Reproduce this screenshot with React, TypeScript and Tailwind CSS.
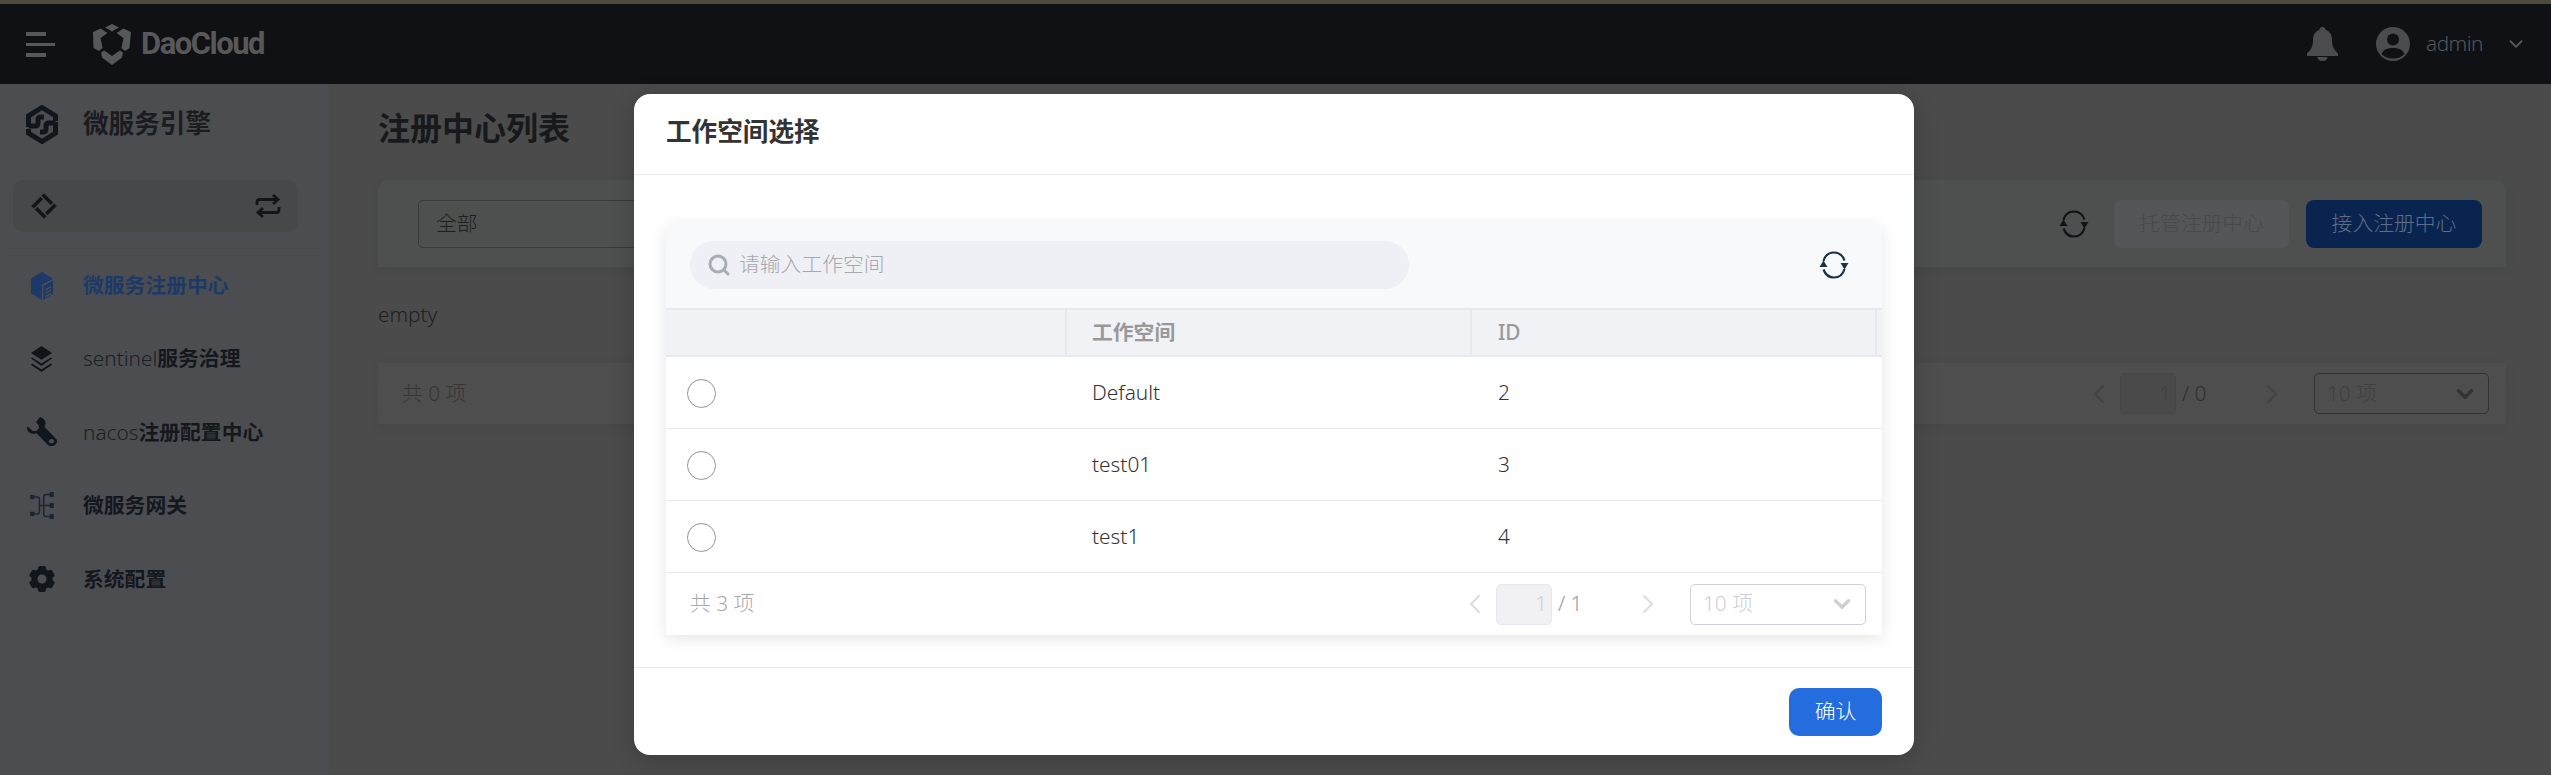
import { ChevronDown, ChevronLeft, ChevronRight, Search } from 'lucide-react';

const FONT = "font-['Noto_Sans','Noto_Sans_CJK_SC',sans-serif]";

function HeaderLogo() {
  return (
    <svg width="38" height="41" viewBox="0 0 38 41" fill="#58585a">
      <path d="M19 0l7 3.500-7 4-7-4z" />
      <path d="M0 8l7.500-3.500 7 4.500-7 5 2 10-3.500 3L.5 24z" />
      <path d="M38 8l-7.500-3.500-7 4.500 7 5-2 10 3.500 3 4.500-3z" />
      <path d="M11 26.500l8 5.500 8-5.500 3 2-1 5L19 41 9 33.500l-1-5z" />
    </svg>
  );
}

function BrandLogo() {
  return (
    <svg width="36" height="39" viewBox="0 0 36 39" fill="none" stroke="#11161d" strokeWidth="5">
      <path d="M4.500 22V11L18 2.500 31.500 11v5" />
      <path d="M4.500 21H11c2 0 3-1 3-3v-3c0-2 1-3 3-3h3" />
      <path d="M31.500 17v11L18 36.500 4.500 28v-4" />
      <path d="M31.500 18H25c-2 0-3 1-3 3v3c0 2-1 3-3 3h-3" />
    </svg>
  );
}

function WorkspaceIcon() {
  return (
    <svg width="26" height="26" viewBox="0 0 26 26" fill="#131518">
      <g transform="rotate(45 13 13)">
        <rect x="4" y="4" width="13" height="3.600" />
        <rect x="18.400" y="4" width="3.600" height="13" />
        <rect x="9" y="18.400" width="13" height="3.600" />
        <rect x="4" y="9" width="3.600" height="13" />
      </g>
    </svg>
  );
}

function SwitchIcon() {
  return (
    <svg width="26" height="24" viewBox="0 0 26 24" fill="none" stroke="#131518" strokeWidth="2.800">
      <path d="M2 11V8c0-1.500 1-2.500 2.500-2.500H23" />
      <path d="M18 1l5 4.500L18 10" />
      <path d="M24 13v3c0 1.500-1 2.500-2.500 2.500H3" />
      <path d="M8 14l-5 4.500L8 23" />
    </svg>
  );
}

function RefreshIcon({ color }: { color: string }) {
  return (
    <svg width="32" height="32" viewBox="0 0 32 32" fill="none" stroke={color} strokeWidth="2.200">
      <path d="M5.500 12C7 6.500 11 3.500 16 3.500c4.500 0 8.500 2.500 10.500 8" />
      <path d="M26.500 20c-1.500 5.500-5.500 8.500-10.500 8.500-4.500 0-8.500-2.500-10.500-8" />
      <path d="M1.500 18l4-6.500 4 6.500z" fill={color} stroke="none" />
      <path d="M22.500 14l4 6.500 4-6.500z" fill={color} stroke="none" />
    </svg>
  );
}

function RegistryIcon() {
  return (
    <svg width="24" height="28" viewBox="0 0 26 33" fill="#1c3a69">
      <path d="M13 0L26 8 13 15v18L0 25V8z" />
      <path d="M14.500 16.500L26 10v15.500L14.500 33zM17 20v2l6.500-3.500v-2zM17 24v2l6.500-3.500v-2zM17 28v2l6.500-3.500v-2z" fillRule="evenodd" />
    </svg>
  );
}

function LayersIcon() {
  return (
    <svg width="25" height="26" viewBox="0 0 26 32" fill="#10141b">
      <path d="M13 0l13 8.500L13 17 0 8.500z" />
      <path d="M1.500 14L13 21.500 24.500 14l1.500 1.500L13 24.500 0 15.500z" />
      <path d="M1.500 21.500L13 29l11.500-7.500L26 23l-13 9-13-9z" />
    </svg>
  );
}

function WrenchIcon() {
  return (
    <svg width="30" height="30" viewBox="0 0 30 36" preserveAspectRatio="none" fill="none">
      <path
        d="M13 0c4 1.500 6 4.500 5.500 8.500-.2 1.500-.5 2.500-1 3.500L29 26c1.500 2 1.500 5-.5 7-2 2.500-5.500 2.500-7.500.5L9.500 19.500c-1 .5-2 .8-3.500.5C2.500 19.500 0 17 0 12.500l.5-1 5 5c2 1 5 0 6-2.500 1-2.500.5-4-1-5.500L9 6l4-6z"
        fill="#11161d"
      />
      <circle cx="24.500" cy="29" r="2.600" fill="#4b4d50" />
    </svg>
  );
}

function GatewayIcon() {
  return (
    <svg width="26" height="27" viewBox="0 0 28 32" fill="none" stroke="#1a2432" strokeWidth="1.800">
      <path d="M3 6h5c2 0 3 1.500 3 3v14c0 1.500-1 3-3 3H3" />
      <path d="M11 16h14" />
      <path d="M25 3h-6c-2 0-3 1.500-3 3v20c0 1.500 1 3 3 3h6" />
      <g fill="#1a2432" stroke="none">
        <rect x="0" y="3.500" width="5" height="5" />
        <rect x="0" y="23.500" width="5" height="5" />
        <rect x="23" y="0" width="5" height="6" />
        <rect x="23" y="13" width="5" height="6" />
        <rect x="23" y="26" width="5" height="6" />
      </g>
    </svg>
  );
}

function GearIcon() {
  return (
    <svg width="26" height="26" viewBox="0 0 26 26">
      <circle cx="13" cy="13" r="7.500" fill="none" stroke="#11161d" strokeWidth="6" />
      {[0, 60, 120, 180, 240, 300].map((deg) => (
        <rect key={deg} x="9" y="0" width="8" height="6" rx="2" fill="#11161d" transform={`rotate(${deg} 13 13)`} />
      ))}
    </svg>
  );
}

function BellIcon() {
  return (
    <svg width="31" height="34" viewBox="0 0 31 34" fill="#4c4c4e">
      <path d="M15.500 0c2 0 3 1.300 3 2.800C23 4.500 25 8 25 13c0 5 1 9 6 13.500V29H0v-2.500C5 22 6 18 6 13c0-5 2-8.500 6.500-10.200C12.500 1.300 13.500 0 15.500 0z" />
      <path d="M10.500 30h10c0 2.500-2 4-5 4s-5-1.500-5-4z" />
    </svg>
  );
}

function AvatarIcon() {
  return (
    <svg width="34" height="34" viewBox="0 0 34 34">
      <circle cx="17" cy="17" r="17" fill="#4c4c4e" />
      <circle cx="17" cy="12.500" r="6" fill="#0f1114" />
      <path d="M5.500 27c2-4.500 6-6 11.500-6s9.500 1.500 11.500 6c-3 3-7 4.500-11.500 4.500S8.500 30 5.500 27z" fill="#0f1114" />
    </svg>
  );
}

function Pager({
  total,
  pages,
  dim,
}: {
  total: string;
  pages: string;
  dim?: boolean;
}) {
  const chevron = dim ? 'text-[#434343]' : 'text-[#dcdcdf]';
  const faint = dim ? 'text-[#404040]' : 'text-[#cfcfd2]';
  return (
    <div className="flex h-full items-center justify-between">
      <span className={`text-[20.800px] ${dim ? 'text-[#363636]' : 'text-[#a8a8ac]'}`}>{total}</span>
      <div className="flex items-center">
        <ChevronLeft className={`size-[32px] ${chevron}`} strokeWidth={1.500} />
        <div
          className={`ml-[5px] flex h-[41px] w-[56px] items-center justify-end rounded-[5px] border pr-[4px] text-[20.800px] ${faint} ${
            dim ? 'border-[#474747] bg-[#4a4a4a]' : 'border-[#e8e9f0] bg-[#f1f1f3]'
          }`}
        >
          1
        </div>
        <span className={`ml-[6px] w-[74px] text-[20.800px] ${dim ? 'text-[#2f2f2f]' : 'text-[#9a9a9e]'}`}>{pages}</span>
        <ChevronRight className={`size-[32px] ${chevron}`} strokeWidth={1.500} />
        <div
          className={`ml-[26px] flex h-[41px] items-center justify-between rounded-[5px] border pl-[12px] pr-[10px] text-[20.800px] ${faint} ${
            dim ? 'w-[175px] border-[#333333]' : 'w-[176px] border-[#cdd0da]'
          }`}
        >
          <span>10 项</span>
          <ChevronDown className={`size-[26px] ${dim ? 'text-[#333333]' : 'text-[#cfcfd2]'}`} strokeWidth={3} />
        </div>
      </div>
    </div>
  );
}

const navItems = [
  { icon: <RegistryIcon />, label: <span className="font-bold text-[#1c3a69]">微服务注册中心</span> },
  {
    icon: <LayersIcon />,
    label: (
      <>
        <span className="font-light text-[#1c2026]">sentinel</span>
        <span className="font-bold">服务治理</span>
      </>
    ),
  },
  {
    icon: <WrenchIcon />,
    label: (
      <>
        <span className="font-light text-[#1c2026]">nacos</span>
        <span className="font-bold">注册配置中心</span>
      </>
    ),
  },
  { icon: <GatewayIcon />, label: <span className="font-bold">微服务网关</span> },
  { icon: <GearIcon />, label: <span className="font-bold">系统配置</span> },
];

const workspaces = [
  { name: 'Default', id: '2' },
  { name: 'test01', id: '3' },
  { name: 'test1', id: '4' },
];

export default function App() {
  return (
    <div className={`${FONT} relative flex h-screen w-full flex-col overflow-hidden bg-[#4b4b4b] font-light`}>
      {/* Top bar */}
      <div className="h-[4px] shrink-0 bg-[#4d4a40]" />
      <header className="flex h-[80px] shrink-0 items-center bg-[#0f1114] pl-[26px] pr-[24px]">
        <div className="flex w-[29px] flex-col gap-[7px]">
          <div className="h-[4px] w-[20px] bg-[#58585a]" />
          <div className="h-[3px] w-[29px] bg-[#58585a]" />
          <div className="h-[4px] w-[20px] bg-[#58585a]" />
        </div>
        <div className="ml-[38px]">
          <HeaderLogo />
        </div>
        <span className="ml-[10px] font-['Roboto',sans-serif] text-[31px] font-bold tracking-[-1.500px] text-[#58585a]">
          DaoCloud
        </span>
        <div className="ml-auto flex items-center">
          <BellIcon />
          <div className="ml-[38px]">
            <AvatarIcon />
          </div>
          <span className="ml-[16px] w-[57px] whitespace-nowrap text-[20.800px] tracking-[-0.500px] text-[#55555a]">admin</span>
          <ChevronDown className="ml-[22px] size-[22px] text-[#55555a]" />
        </div>
      </header>

      <div className="flex min-h-0 flex-1">
        {/* Sidebar */}
        <aside className="w-[330px] shrink-0 border-r border-[#484a4c] bg-[#4b4d50] text-[20.800px] text-[#14181e]">
          <div className="flex h-[80px] items-center pl-[24px]">
            <BrandLogo />
            <span className="ml-[23px] text-[25.600px] font-bold text-[#1a1c20]">微服务引擎</span>
          </div>
          <div className="mx-[13px] mt-[16px] flex h-[52px] w-[285px] items-center justify-between rounded-[10px] bg-[#47484a] pl-[18px] pr-[17px]">
            <WorkspaceIcon />
            <SwitchIcon />
          </div>
          <div className="mx-[10px] mt-[16px] h-px bg-[#46484b]" />
          <nav>
            {navItems.map((item, i) => (
              <div key={i} className="flex h-[73.400px] items-center">
                <div className="flex w-[83px] justify-center">{item.icon}</div>
                <div>{item.label}</div>
              </div>
            ))}
          </nav>
        </aside>

        {/* Main */}
        <main className="min-w-0 flex-1 pl-[48px] pr-[45px]">
          <div className="flex h-[88px] items-center text-[32px] font-bold text-[#17191c]">注册中心列表</div>
          <div className="mt-[8px] flex h-[87px] items-center rounded-t-[10px] bg-[#4e5050] pl-[40px] pr-[24px] shadow-[0_4px_12px_rgba(0,0,0,0.06)]">
            <div className="flex h-[48px] w-[500px] items-center rounded-[5px] border border-[#38393a] pl-[17px] text-[20.800px] text-[#1e1e1e]">
              全部
            </div>
            <div className="ml-auto">
              <RefreshIcon color="#101215" />
            </div>
            <button className="ml-[24px] h-[48px] w-[175px] rounded-[8px] bg-[#545659] text-[20.800px] text-[#47494c]">
              托管注册中心
            </button>
            <button className="ml-[17px] h-[48px] w-[176px] rounded-[8px] bg-[#0a2450] text-[20.800px] text-[#5f6e88]">
              接入注册中心
            </button>
          </div>
          <div className="flex h-[96px] items-center text-[20.800px] text-[#1f1f1f]">empty</div>
          <div className="h-[61px] bg-[#4e4e4e] pl-[24px] pr-[17px] shadow-[0_4px_12px_rgba(0,0,0,0.06)]">
            <Pager total="共 0 项" pages="/ 0" dim />
          </div>
        </main>
      </div>

      {/* Workspace dialog */}
      <div className="absolute left-[634px] top-[94px] flex h-[661px] w-[1280px] flex-col rounded-[16px] bg-white shadow-[0_4px_24px_rgba(0,0,0,0.2)]">
        <div className="flex h-[81px] shrink-0 items-center border-b border-[#e9eaee] pb-[4px] pl-[32px] text-[25.600px] font-bold text-[#333333]">
          工作空间选择
        </div>
        <div className="flex-1 px-[32px] pt-[47px]">
          <div className="h-[413px] rounded-t-[10px] bg-white shadow-[0_4px_16px_rgba(0,0,0,0.1)]">
            <div className="flex h-[86px] items-center justify-between rounded-t-[10px] bg-[#f8f9fb] pl-[24px] pr-[32px]">
              <div className="flex h-[48px] w-[719px] items-center rounded-full bg-[#eef0f5] pl-[17px]">
                <Search className="size-[24px] text-[#a8adb5]" strokeWidth={3} />
                <span className="ml-[8px] text-[20.800px] text-[#a8a8ac]">请输入工作空间</span>
              </div>
              <RefreshIcon color="#1c3148" />
            </div>
            <div className="grid h-[49px] grid-cols-[399px_405px_407px_5px] border-y-2 border-[#e8e9f0] bg-[#f0f2f6] text-[20.800px] font-medium text-[#999999]">
              <div />
              <div className="flex items-center border-l-2 border-[#e8e9f0] pl-[25px] font-bold">工作空间</div>
              <div className="flex items-center border-l-2 border-r-2 border-[#e8e9f0] pl-[26px]">ID</div>
              <div />
            </div>
            {workspaces.map((row) => (
              <div
                key={row.id}
                className="grid h-[72px] grid-cols-[399px_405px_407px_5px] border-b border-[#e8e9ee] pt-px text-[20.800px] text-[#333333]"
              >
                <div className="flex items-center pl-[21px]">
                  <div className="size-[29px] rounded-full border border-[#8f939c]" />
                </div>
                <div className="flex items-center pl-[27px]">{row.name}</div>
                <div className="flex items-center pl-[28px]">{row.id}</div>
                <div />
              </div>
            ))}
            <div className="h-[62px] pl-[24px] pr-[16px]">
              <Pager total="共 3 项" pages="/ 1" />
            </div>
          </div>
        </div>
        <div className="flex h-[88px] shrink-0 justify-end border-t border-[#e8e9ee] pr-[32px] pt-[20px]">
          <button className="h-[48px] w-[93px] rounded-[10px] bg-[#246dde] text-[20.800px] text-white">确认</button>
        </div>
      </div>
    </div>
  );
}
